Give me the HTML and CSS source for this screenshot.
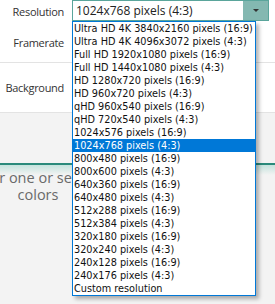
FILE: index.html
```html
<!DOCTYPE html>
<html lang="en">
<head>
    <meta charset="UTF-8">
    <title>Export settings</title>
    <link rel="stylesheet" href="styles.css">
</head>
<body>
    <div class="panel">
        <!-- Output section -->
        <div class="section section-output">
            <div class="row row-resolution">
                <span class="label">Resolution</span>
                <div class="combo">
                    <span class="combo-value">1024x768 pixels (4:3)</span>
                    <span class="combo-button"><span class="arrow"></span></span>
                    <ul class="combo-list">
                        <li>Ultra HD 4K 3840x2160 pixels (16:9)</li>
                        <li>Ultra HD 4K 4096x3072 pixels (4:3)</li>
                        <li>Full HD 1920x1080 pixels (16:9)</li>
                        <li>Full HD 1440x1080 pixels (4:3)</li>
                        <li>HD 1280x720 pixels (16:9)</li>
                        <li>HD 960x720 pixels (4:3)</li>
                        <li>qHD 960x540 pixels (16:9)</li>
                        <li>qHD 720x540 pixels (4:3)</li>
                        <li>1024x576 pixels (16:9)</li>
                        <li class="selected">1024x768 pixels (4:3)</li>
                        <li>800x480 pixels (16:9)</li>
                        <li>800x600 pixels (4:3)</li>
                        <li>640x360 pixels (16:9)</li>
                        <li>640x480 pixels (4:3)</li>
                        <li>512x288 pixels (16:9)</li>
                        <li>512x384 pixels (4:3)</li>
                        <li>320x180 pixels (16:9)</li>
                        <li>320x240 pixels (4:3)</li>
                        <li>240x128 pixels (16:9)</li>
                        <li>240x176 pixels (4:3)</li>
                        <li>Custom resolution</li>
                    </ul>
                </div>
            </div>
            <div class="row row-framerate">
                <span class="label">Framerate</span>
            </div>
        </div>

        <!-- Background section -->
        <div class="section section-background">
            <div class="row row-background">
                <span class="label">Background</span>
            </div>
        </div>

        <!-- Colors area -->
        <div class="colors">
            <div class="colors-tab"></div>
            <div class="hint">
                <span>Filter one or several</span>
                <span>colors</span>
            </div>
        </div>
    </div>
</body>
</html>
```

FILE: styles.css
```css
body {
    margin: 0;
    padding: 0;
    background-color: #f3f3f3;
    font-family: "Open Sans", sans-serif;
    overflow: hidden;
}

.panel {
    width: 275px;
    height: 304px;
}

.section {
    background-color: #fff;
    border-bottom: 1px solid #e3e3e3;
}

.row {
    display: flex;
    align-items: center;
}

.row-resolution {
    height: 22px;
}

.row-framerate {
    height: 40px;
}

.row-background {
    height: 49px;
}

.label {
    width: 64px;
    text-align: right;
    font-size: 11px;
    letter-spacing: -0.3px;
    color: #333;
}

.combo {
    position: relative;
    display: flex;
    align-self: flex-start;
    margin-left: 8px;
    width: 197px;
    height: 21px;
    box-sizing: border-box;
    border: 1px solid #5aa59b;
    background-color: #fff;
}

.combo-value {
    flex: 1;
    padding-left: 3px;
    font-size: 12px;
    line-height: 19px;
    color: #222;
}

.combo-button {
    width: 25px;
    background-color: #84b8b1;
    display: flex;
    align-items: center;
    justify-content: center;
}

.arrow {
    width: 0;
    height: 0;
    border-left: 3px solid transparent;
    border-right: 3px solid transparent;
    border-top: 3px solid #333;
}

.combo-list {
    position: absolute;
    top: 20px;
    left: -1px;
    width: 182px;
    margin: 0;
    padding: 0;
    list-style: none;
    background-color: #fff;
    border: 1px solid #0078d7;
    box-shadow: 3px 3px 4px rgba(0, 0, 0, 0.3);
    z-index: 10;
}

.combo-list li {
    height: 13px;
    line-height: 13px;
    padding-left: 1px;
    font-family: "DejaVu Sans Condensed", "DejaVu Sans", sans-serif;
    font-size: 10.8px;
    color: #111;
    white-space: nowrap;
}

.combo-list li.selected {
    background-color: #0078d7;
    color: #fff;
}

.colors {
    padding-top: 50px;
}

.colors-tab {
    height: 10px;
    border-top: 2px solid #2b8a7b;
    background: linear-gradient(#c4e3dd, #f3f3f3);
}

.hint {
    width: 76px;
    margin-top: -6px;
    display: flex;
    flex-direction: column;
    align-items: center;
    font-size: 14.5px;
    line-height: 17px;
    color: #6a6a6a;
    white-space: nowrap;
}
```
